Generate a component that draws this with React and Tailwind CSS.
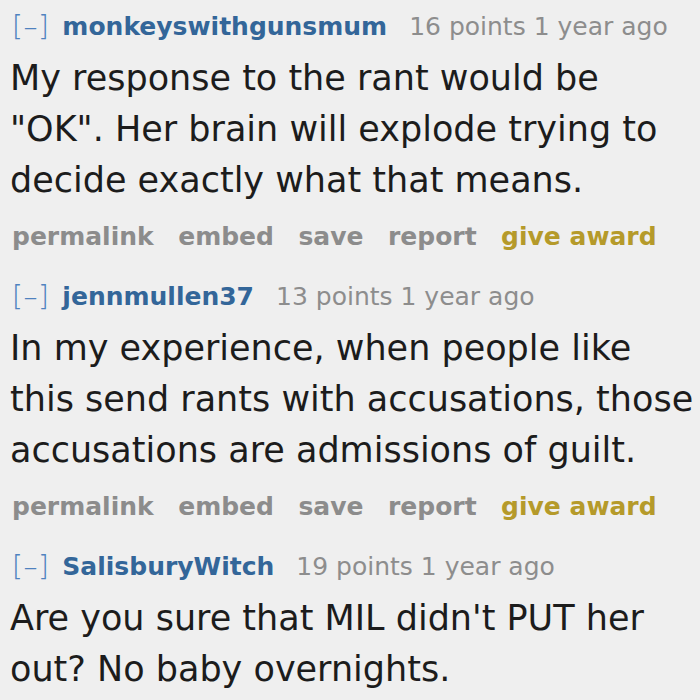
export default function App() {
  const comments = [
    {
      user: "monkeyswithgunsmum",
      points: "16 points",
      lines: ["My response to the rant would be", "\"OK\". Her brain will explode trying to", "decide exactly what that means."],
      actions: true,
    },
    {
      user: "jennmullen37",
      points: "13 points",
      lines: ["In my experience, when people like", "this send rants with accusations, those", "accusations are admissions of guilt."],
      actions: true,
    },
    {
      user: "SalisburyWitch",
      points: "19 points",
      lines: ["Are you sure that MIL didn't PUT her", "out? No baby overnights."],
      actions: false,
    },
  ];
  return (
    <div className="w-[700px] h-[700px] overflow-hidden bg-[#efefef] pl-[10px] pt-[7px]" style={{ fontFamily: "Verdana, 'DejaVu Sans', sans-serif" }}>
      {comments.map((c, i) => (
        <div key={i} className="mb-[20px]">
          <div className="h-[40px] leading-[40px] text-[25px] whitespace-nowrap flex items-center">
            <span className="text-[#4f82bf] text-[28px] font-light ml-[2px] mr-[13px] tracking-[0.5px]">[–]</span>
            <span className="font-bold text-[#336699] mr-[22px]">{c.user}</span>
            <span className="text-[#8d8d8d]">{c.points} 1 year ago</span>
          </div>
          <div className="mt-[6px] text-[35px] leading-[51px] text-[#1c1c1c] whitespace-nowrap">
            {c.lines.map((l, j) => (
              <div key={j}>{l}</div>
            ))}
          </div>
          {c.actions && (
            <div className="mt-[11px] pl-[2px] h-[40px] leading-[40px] text-[25px] font-bold whitespace-nowrap flex gap-[24.5px]">
              <span className="text-[#8c8c8c]">permalink</span>
              <span className="text-[#8c8c8c]">embed</span>
              <span className="text-[#8c8c8c]">save</span>
              <span className="text-[#8c8c8c]">report</span>
              <span className="text-[#b59a2a]">give award</span>
            </div>
          )}
        </div>
      ))}
    </div>
  );
}
